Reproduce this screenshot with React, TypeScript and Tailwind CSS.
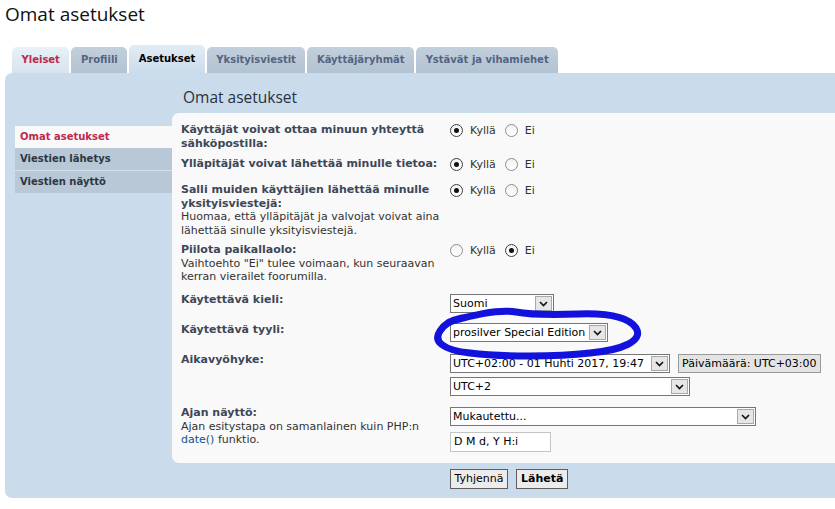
import React from 'react';

// phpBB-style user control panel: "Omat asetukset" (own settings)

const tabs = [
  { label: 'Yleiset', state: 'hover' },
  { label: 'Profiili', state: 'idle' },
  { label: 'Asetukset', state: 'active' },
  { label: 'Yksityisviestit', state: 'idle' },
  { label: 'Käyttäjäryhmät', state: 'idle' },
  { label: 'Ystävät ja vihamiehet', state: 'idle' },
];

const Radio = ({ checked }: { checked: boolean }) => (
  <span
    className={`flex h-[13px] w-[13px] shrink-0 items-center justify-center rounded-full border bg-gradient-to-b from-[#f2f2f2] to-white ${
      checked ? 'border-[#3f3f3f]' : 'border-[#8c8c8c]'
    }`}
  >
    {checked && <span className="h-[5px] w-[5px] rounded-full bg-[#111]" />}
  </span>
);

const YesNo = ({ yes }: { yes: boolean }) => (
  <div className="mt-[1px] flex h-[13px] items-center text-[#333]">
    <Radio checked={yes} />
    <span className="ml-[7px]">Kyllä</span>
    <span className="ml-[9px]">
      <Radio checked={!yes} />
    </span>
    <span className="ml-[7px]">Ei</span>
  </div>
);

const Chevron = () => (
  <svg width="9" height="6" viewBox="0 0 9 6">
    <path d="M1 1l3.5 3.5L8 1" fill="none" stroke="#111" strokeWidth="1.6" />
  </svg>
);

const Select = ({ value, className }: { value: string; className: string }) => (
  <div className={`flex h-[19px] items-center border border-[#767676] bg-white ${className}`}>
    <span className="flex-1 overflow-hidden whitespace-nowrap pl-[2px] text-black">{value}</span>
    <span className="mr-[1px] flex h-[15px] w-[17px] shrink-0 items-center justify-center border border-[#a8a8a8] bg-[#e6e6e6]">
      <Chevron />
    </span>
  </div>
);

const Label = ({ children }: { children: React.ReactNode }) => (
  <span className="font-bold text-[#3d4757]">{children}</span>
);

export default function App() {
  return (
    <div className="relative h-[509px] w-[835px] overflow-hidden bg-white font-['DejaVu_Sans',Verdana,sans-serif] text-[11px] leading-[13.5px]">
      <h2 className="h-[45px] pl-[5px] pt-[1px] font-['Open_Sans',sans-serif] text-[19px] leading-[26px] text-[#111]">
        Omat asetukset
      </h2>

      {/* tabs */}
      <div className="flex h-[28px] items-end gap-[2px] pl-[12px] text-[10px] font-bold">
        {tabs.map((t) => (
          <div
            key={t.label}
            className={
              t.state === 'active'
                ? 'flex h-[28px] items-center rounded-t-[5px] bg-gradient-to-b from-[#e3ecf5] to-[#cadceb] px-[9.5px] pb-[1px] text-black'
                : t.state === 'hover'
                ? 'flex h-[26px] items-center rounded-t-[5px] bg-gradient-to-b from-[#eaf1f7] to-[#d6e3ef] px-[9.5px] text-[#bc2a4d]'
                : 'flex h-[26px] items-center rounded-t-[5px] bg-gradient-to-b from-[#c2cfdc] to-[#b3c2d1] px-[9.5px] text-[#536482]'
            }
          >
            {t.label}
          </div>
        ))}
      </div>

      {/* panel */}
      <div className="ml-[5px] rounded-l-[7px] bg-[#cadceb] pb-[9px]">
        <h3 className="h-[40px] pl-[178px] pt-[14px] font-['Open_Sans',sans-serif] text-[15.5px] leading-[20px] text-[#28313f]">
          Omat asetukset
        </h3>
        <div className="flex">
          <ul className="w-[167px] shrink-0 pl-[10px] pt-[13px] text-[10px] font-bold">
            <li className="flex h-[22px] items-center bg-[#f9f9f9] pl-[5px] text-[#bc2a4d]">Omat asetukset</li>
            <li className="flex h-[22px] items-center bg-[#b9c8d7] pl-[5px] text-[#2d3642]">Viestien lähetys</li>
            <li className="flex h-[23px] items-center border-t border-[#d3dfea] bg-[#b9c8d7] pl-[5px] text-[#2d3642]">
              Viestien näyttö
            </li>
          </ul>

          <div className="flex-1">
            <dl className="h-[350px] rounded-l-[7px] bg-[#f9f9f9] pl-[9px] pt-[10px] text-[#333]">
              <div className="flex h-[34px]">
                <dt className="w-[269px] shrink-0 whitespace-nowrap">
                  <Label>
                    Käyttäjät voivat ottaa minuun yhteyttä
                    <br />
                    sähköpostilla:
                  </Label>
                </dt>
                <dd>
                  <YesNo yes />
                </dd>
              </div>

              <div className="flex h-[26px]">
                <dt className="w-[269px] shrink-0 whitespace-nowrap">
                  <Label>Ylläpitäjät voivat lähettää minulle tietoa:</Label>
                </dt>
                <dd>
                  <YesNo yes />
                </dd>
              </div>

              <div className="flex h-[60px]">
                <dt className="w-[269px] shrink-0 whitespace-nowrap">
                  <Label>
                    Salli muiden käyttäjien lähettää minulle
                    <br />
                    yksityisviestejä:
                  </Label>
                  <br />
                  Huomaa, että ylläpitäjät ja valvojat voivat aina
                  <br />
                  lähettää sinulle yksityisviestejä.
                </dt>
                <dd>
                  <YesNo yes />
                </dd>
              </div>

              <div className="flex h-[50px]">
                <dt className="w-[269px] shrink-0 whitespace-nowrap">
                  <Label>Piilota paikallaolo:</Label>
                  <br />
                  Vaihtoehto "Ei" tulee voimaan, kun seuraavan
                  <br />
                  kerran vierailet foorumilla.
                </dt>
                <dd>
                  <YesNo yes={false} />
                </dd>
              </div>

              <div className="flex h-[30px]">
                <dt className="w-[269px] shrink-0">
                  <Label>Käytettävä kieli:</Label>
                </dt>
                <dd className="pt-[1px]">
                  <Select value="Suomi" className="w-[104px]" />
                </dd>
              </div>

              <div className="flex h-[30px]">
                <dt className="w-[269px] shrink-0">
                  <Label>Käytettävä tyyli:</Label>
                </dt>
                <dd>
                  <Select value="prosilver Special Edition" className="w-[158px]" />
                </dd>
              </div>

              <div className="flex h-[53px]">
                <dt className="w-[269px] shrink-0">
                  <Label>Aikavyöhyke:</Label>
                </dt>
                <dd className="pt-[1px]">
                  <div className="flex items-center gap-[8px]">
                    <Select value="UTC+02:00 - 01 Huhti 2017, 19:47" className="w-[220px]" />
                    <span className="flex h-[19px] items-center border border-[#9a9a9a] bg-[#e4e4e4] px-[3px] text-black">
                      Päivämäärä: UTC+03:00
                    </span>
                  </div>
                  <Select value="UTC+2" className="mt-[4px] w-[240px]" />
                </dd>
              </div>

              <div className="flex">
                <dt className="w-[269px] shrink-0 whitespace-nowrap">
                  <Label>Ajan näyttö:</Label>
                  <br />
                  Ajan esitystapa on samanlainen kuin PHP:n
                  <br />
                  <a className="text-[#105289]">date()</a> funktio.
                </dt>
                <dd className="pt-[1px]">
                  <Select value="Mukautettu..." className="w-[306px]" />
                  <div className="mt-[6px] flex h-[20px] w-[101px] items-center border border-[#c4c4c4] bg-white pl-[3px] text-black">
                    D M d, Y H:i
                  </div>
                </dd>
              </div>
            </dl>

            <div className="flex gap-[8px] pl-[278px] pt-[6px] text-black">
              <button className="h-[20px] border border-[#5f5f5f] bg-[#ececec] px-[3.5px]">Tyhjennä</button>
              <button className="h-[20px] border border-[#5f5f5f] bg-[#ececec] px-[4px] font-bold">Lähetä</button>
            </div>
          </div>
        </div>
      </div>

      {/* hand-drawn marker loop around the style selector */}
      <svg className="pointer-events-none absolute left-0 top-0" width="835" height="509" viewBox="0 0 835 509">
        <path
          d="M449 322 C468 316 498 309 516 312 C532 315 550 315 578 314 C606 313 628 316 636 328 C644 341 622 350 590 353 C556 357 502 357 470 353 C442 350 433 341 440 331 C444 324 452 320 462 318"
          fill="none"
          stroke="#1212dc"
          strokeWidth="7"
          strokeLinecap="round"
          strokeLinejoin="round"
        />
      </svg>
    </div>
  );
}
